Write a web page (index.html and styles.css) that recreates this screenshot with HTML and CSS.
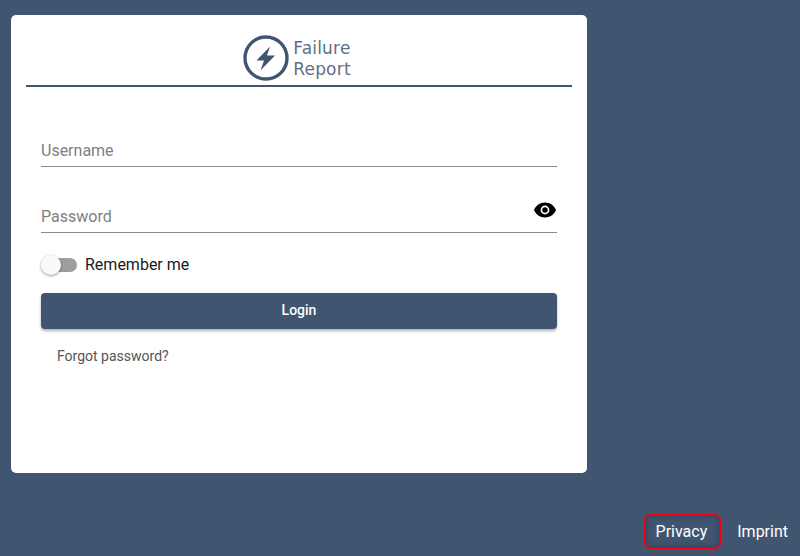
FILE: index.html
```html
<!DOCTYPE html>
<html lang="en">
<head>
    <meta charset="UTF-8">
    <meta name="viewport" content="width=device-width, initial-scale=1.0">
    <title>Failure Report</title>
    <link rel="stylesheet" href="styles.css">
</head>
<body>
    <div class="login-card">
        <div class="logo-row">
            <svg class="logo-icon" width="46" height="46" viewBox="0 0 46 46">
                <circle cx="23" cy="23" r="21" fill="none" stroke="#3f5570" stroke-width="3.4"/>
                <path d="M27 11.5 L13.5 25.5 H21 L17.5 35.5 L32 20.5 H24 Z" fill="#3f5570"/>
            </svg>
            <div class="logo-text">Failure<br>Report</div>
        </div>
        <form class="login-form">
            <div class="field field-user">
                <span class="field-label">Username</span>
            </div>
            <div class="field field-pass">
                <span class="field-label">Password</span>
                <svg class="eye-icon" width="24" height="24" viewBox="0 0 24 24">
                    <path fill-rule="evenodd" d="M12 4.500C7 4.500 2.730 7.610 1 12c1.730 4.390 6 7.500 11 7.500s9.270-3.110 11-7.500c-1.730-4.390-6-7.500-11-7.500zM12 16.400a4.400 4.400 0 1 1 0-8.800 4.400 4.400 0 0 1 0 8.800zM12 9.300a2.700 2.700 0 1 0 0 5.400 2.700 2.700 0 0 0 0-5.400z"/>
                </svg>
            </div>
            <div class="remember-row">
                <span class="toggle"><span class="toggle-thumb"></span></span>
                <span class="remember-label">Remember me</span>
            </div>
            <button type="button" class="login-btn">Login</button>
            <a class="forgot-link">Forgot password?</a>
        </form>
    </div>
    <div class="footer-links">
        <a class="footer-link footer-link-focus">Privacy</a>
        <a class="footer-link">Imprint</a>
    </div>
</body>
</html>
```

FILE: styles.css
```css
body {
    margin: 0;
    height: 556px;
    overflow: hidden;
    box-sizing: border-box;
    padding: 15px 0 0 11px;
    background-color: #3f5570;
    font-family: Roboto, Arial, sans-serif;
    display: flex;
    flex-direction: column;
}
.login-card {
    width: 576px;
    height: 458px;
    box-sizing: border-box;
    background: white;
    border-radius: 5px;
    padding: 0 15px;
}
.logo-row {
    height: 50px;
    border-bottom: 2px solid #3f5570;
    display: flex;
    justify-content: center;
    align-items: flex-start;
    gap: 4px;
    padding: 20px 4px 0 0;
}
.logo-icon {
    display: block;
}
.logo-text {
    font-family: "DejaVu Sans", sans-serif;
    font-size: 17px;
    line-height: 21px;
    letter-spacing: 0.2px;
    color: #5f6f84;
    margin-top: 3px;
}
.login-form {
    padding: 0 15px;
}
.field {
    position: relative;
    border-bottom: 1px solid #8a8a8a;
    height: 30px;
}
.field-user {
    margin-top: 49px;
}
.field-pass {
    margin-top: 35px;
}
.field-label {
    display: block;
    font-size: 16px;
    line-height: 30px;
    color: #808080;
}
.eye-icon {
    position: absolute;
    right: 0;
    top: -4px;
}
.remember-row {
    display: flex;
    align-items: center;
    margin-top: 20px;
    height: 22px;
}
.toggle {
    position: relative;
    width: 34px;
    height: 14px;
    margin: 2px 9px 0 2px;
    border-radius: 7px;
    background: #9e9e9e;
}
.toggle-thumb {
    position: absolute;
    left: -2px;
    top: -3px;
    width: 20px;
    height: 20px;
    border-radius: 50%;
    background: #fafafa;
    box-shadow: 0 1px 3px rgba(0,0,0,0.4);
}
.remember-label {
    font-size: 16px;
    color: #1a1a1a;
    margin-left: -1px;
}
.login-btn {
    display: block;
    width: 100%;
    height: 36px;
    margin-top: 18px;
    padding: 0 0 2px;
    border: none;
    border-radius: 4px;
    background: #3f5570;
    color: white;
    font-family: Roboto, Arial, sans-serif;
    font-size: 14px;
    font-weight: 500;
    box-shadow: 0 2px 3px rgba(0,0,0,0.3);
}
.forgot-link {
    display: block;
    margin: 19px 0 0 16px;
    font-size: 14px;
    line-height: 16px;
    color: #555;
}
.footer-links {
    margin-top: auto;
    display: flex;
    justify-content: flex-end;
    align-items: center;
    gap: 16px;
    padding: 0 12px 7px 0;
}
.footer-link {
    color: white;
    font-size: 16px;
    line-height: 19px;
    padding: 7px 0;
}
.footer-link-focus {
    padding: 6px 12px 6px 10px;
    border: 2px solid #f00010;
    border-radius: 6px;
    box-shadow: 0 0 6px rgba(0,0,0,0.25) inset;
}
```
